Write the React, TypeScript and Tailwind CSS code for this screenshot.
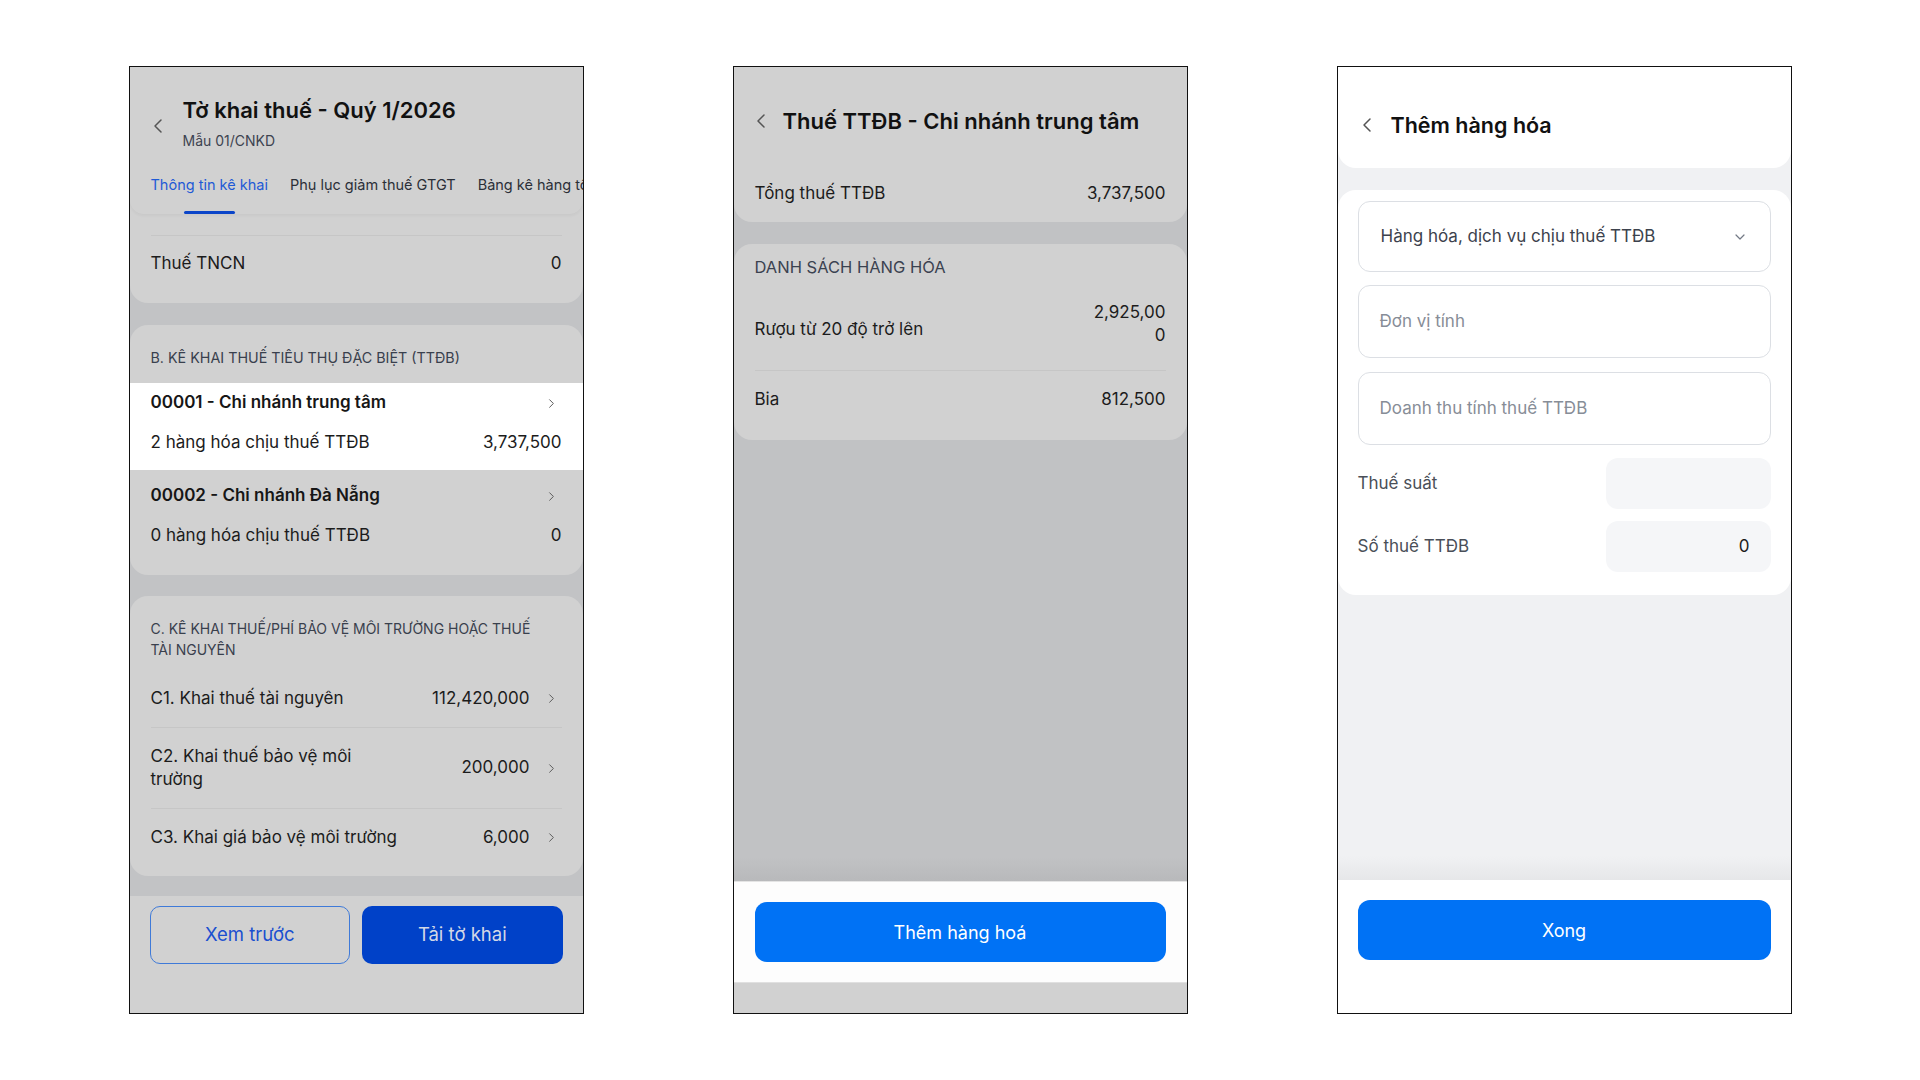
import { ChevronLeft, ChevronRight, ChevronDown } from 'lucide-react';

function Frame({ children, bg }: { children: React.ReactNode; bg: string }) {
  return (
    <div className={`w-[455px] h-[948px] border-[1.5px] border-[#111] overflow-hidden flex flex-col ${bg}`}>
      {children}
    </div>
  );
}

function Row({ label, value, bold }: { label: string; value?: string; bold?: boolean }) {
  return (
    <div className="flex items-center justify-between h-[40px]">
      <span className={bold ? 'font-semibold text-[17px] text-[#161616]' : 'text-[17px] text-[#1c1c1c]'}>{label}</span>
      {value !== undefined ? (
        <span className="text-[17px] text-[#1c1c1c]">{value}</span>
      ) : (
        <ChevronRight size={15} strokeWidth={1.6} className="text-[#5c5c5c] mr-[3px]" />
      )}
    </div>
  );
}

function LinkRow({ label, value, h }: { label: React.ReactNode; value: string; h: string }) {
  return (
    <div className={`flex items-center justify-between ${h}`}>
      <span className="text-[17px] leading-[23px] text-[#1c1c1c]">{label}</span>
      <div className="flex items-center gap-[14px]">
        <span className="text-[17px] text-[#1c1c1c]">{value}</span>
        <ChevronRight size={15} strokeWidth={1.6} className="text-[#5c5c5c] mr-[3px]" />
      </div>
    </div>
  );
}

function TaxDeclaration() {
  return (
    <Frame bg="bg-[#c2c3c5]">
      <div className="bg-[#d1d1d1] rounded-b-[18px]">
        <div className="shadow-[0_2px_3px_rgba(0,0,0,0.04)] rounded-b-[14px]">
          <div className="flex items-center pl-[16px] pt-[28px]">
            <ChevronLeft size={24} strokeWidth={1.5} className="text-[#555] mt-[6px]" />
            <div className="ml-[13px]">
              <div className="text-[22px] leading-[30px] font-semibold text-[#111]">Tờ khai thuế - Quý 1/2026</div>
              <div className="text-[14px] leading-[20px] text-[#3d4350] mt-[6px]">Mẫu 01/CNKD</div>
            </div>
          </div>
          <div className="flex gap-[22px] pl-[21px] mt-[24px] whitespace-nowrap text-[14.5px]">
            <div className="flex flex-col items-center">
              <span className="text-[#1f5ad6] leading-[20px]">Thông tin kê khai</span>
              <div className="w-[51px] h-[3px] bg-[#0b45c9] rounded-full mt-[16px]" />
            </div>
            <span className="text-[#2b2f38] leading-[20px]">Phụ lục giảm thuế GTGT</span>
            <span className="text-[#2b2f38] leading-[20px]">Bảng kê hàng tồn kho</span>
          </div>
        </div>
        <div className="px-[21px] pt-[21px] pb-[11px]">
          <div className="border-t border-[#c6c6c6]" />
          <div className="flex items-center justify-between h-[56px]">
            <span className="text-[17px] text-[#1c1c1c]">Thuế TNCN</span>
            <span className="text-[17px] text-[#1c1c1c]">0</span>
          </div>
        </div>
      </div>

      <div className="bg-[#d1d1d1] rounded-[18px] mt-[22px] overflow-hidden">
        <div className="px-[21px] pt-[23px] pb-[15px] text-[14.3px] leading-[20px] uppercase text-[#39404d] whitespace-nowrap">
          B. Kê khai thuế tiêu thụ đặc biệt (TTĐB)
        </div>
        <div className="bg-white px-[21px] pb-[7px]">
          <Row label="00001 - Chi nhánh trung tâm" bold />
          <Row label="2 hàng hóa chịu thuế TTĐB" value="3,737,500" />
        </div>
        <div className="px-[21px] pt-[6px] pb-[19px]">
          <Row label="00002 - Chi nhánh Đà Nẵng" bold />
          <Row label="0 hàng hóa chịu thuế TTĐB" value="0" />
        </div>
      </div>

      <div className="bg-[#d1d1d1] rounded-[18px] mt-[21px] px-[21px] pb-[10px]">
        <div className="pt-[22px] pb-[10px] text-[14px] leading-[21px] uppercase text-[#39404d]">
          C. Kê khai thuế/phí bảo vệ môi trường hoặc thuế
          <br />
          tài nguyên
        </div>
        <LinkRow label="C1. Khai thuế tài nguyên" value="112,420,000" h="h-[57px]" />
        <div className="border-t border-[#c6c6c6]" />
        <LinkRow
          label={
            <>
              C2. Khai thuế bảo vệ môi
              <br />
              trường
            </>
          }
          value="200,000"
          h="h-[80px]"
        />
        <div className="border-t border-[#c6c6c6]" />
        <LinkRow label="C3. Khai giá bảo vệ môi trường" value="6,000" h="h-[57px]" />
      </div>

      <div className="mt-[20px] flex-1 bg-[#d1d1d1] px-[20px] pt-[10px] flex gap-[12px]">
        <button className="w-[201px] h-[58px] rounded-[10px] border border-[#3f7ad8] text-[#1a4fd0] text-[18.5px]">
          Xem trước
        </button>
        <button className="w-[201px] h-[58px] rounded-[10px] bg-[#0041c8] text-[#d3d8e6] text-[18.5px]">
          Tải tờ khai
        </button>
      </div>
    </Frame>
  );
}

function BranchTax() {
  return (
    <Frame bg="bg-[#c1c2c4]">
      <div className="bg-[#d1d1d1] rounded-b-[18px] px-[21px] pt-[39px] pb-[16px]">
        <div className="flex items-center">
          <ChevronLeft size={24} strokeWidth={1.5} className="text-[#555] -ml-[6px]" />
          <span className="ml-[10px] text-[22px] leading-[30px] font-semibold text-[#111]">
            Thuế TTĐB - Chi nhánh trung tâm
          </span>
        </div>
        <div className="flex items-center justify-between h-[24px] mt-[46px]">
          <span className="text-[17px] text-[#1c1c1c]">Tổng thuế TTĐB</span>
          <span className="text-[17px] text-[#1c1c1c]">3,737,500</span>
        </div>
      </div>

      <div className="bg-[#d1d1d1] rounded-[18px] mt-[22px] px-[21px] pb-[11px]">
        <div className="pt-[12px] text-[16.5px] leading-[22px] uppercase text-[#3b4250]">Danh sách hàng hóa</div>
        <div className="flex items-center justify-between h-[80px] mt-[12px]">
          <span className="text-[17px] text-[#1c1c1c]">Rượu từ 20 độ trở lên</span>
          <span className="text-[17px] leading-[23px] text-[#1c1c1c] text-right -mt-[12px]">
            2,925,00
            <br />0
          </span>
        </div>
        <div className="border-t border-[#c6c6c6]" />
        <div className="flex items-center justify-between h-[58px]">
          <span className="text-[17px] text-[#1c1c1c]">Bia</span>
          <span className="text-[17px] text-[#1c1c1c]">812,500</span>
        </div>
      </div>

      <div className="flex-1 flex flex-col justify-end">
        <div className="h-[24px] bg-gradient-to-b from-transparent to-[#b8b9bb]" />
      </div>
      <div className="h-[101px] bg-[#fdfdfd] px-[21px] pt-[20px] border-t border-[#e4e4e4]">
        <button className="w-full h-[60px] rounded-[12px] bg-[#0072f5] text-white text-[18px]">
          Thêm hàng hoá
        </button>
      </div>
      <div className="h-[31px] bg-[#d1d1d1] border-t border-[#e0e0e0]" />
    </Frame>
  );
}

function AddGoods() {
  return (
    <Frame bg="bg-[#f0f1f3]">
      <div className="bg-white rounded-b-[18px] h-[101px] flex items-center pl-[17px] pt-[14px]">
        <ChevronLeft size={24} strokeWidth={1.5} className="text-[#555]" />
        <span className="ml-[12px] text-[21.5px] leading-[30px] font-semibold text-[#111]">Thêm hàng hóa</span>
      </div>

      <div className="bg-white rounded-[18px] mt-[22px] px-[20px] pt-[11px] pb-[23px]">
        <div className="h-[71px] rounded-[12px] border border-[#dcdfe4] flex items-center justify-between pl-[22px] pr-[22px]">
          <span className="text-[17px] text-[#3c424d]">Hàng hóa, dịch vụ chịu thuế TTĐB</span>
          <ChevronDown size={16} strokeWidth={1.8} className="text-[#737985]" />
        </div>
        <div className="h-[73px] mt-[13px] rounded-[12px] border border-[#dcdfe4] flex items-center pl-[21px]">
          <span className="text-[17px] text-[#878d97]">Đơn vị tính</span>
        </div>
        <div className="h-[73px] mt-[14px] rounded-[12px] border border-[#dcdfe4] flex items-center pl-[21px]">
          <span className="text-[17px] text-[#878d97]">Doanh thu tính thuế TTĐB</span>
        </div>
        <div className="flex items-center justify-between mt-[13px]">
          <span className="text-[17px] text-[#4a4f58]">Thuế suất</span>
          <div className="w-[165px] h-[51px] rounded-[12px] bg-[#f5f6f8]" />
        </div>
        <div className="flex items-center justify-between mt-[12px]">
          <span className="text-[17px] text-[#4a4f58]">Số thuế TTĐB</span>
          <div className="w-[165px] h-[51px] rounded-[12px] bg-[#f5f6f8] flex items-center justify-end pr-[21px]">
            <span className="text-[17px] text-[#1c1c1c]">0</span>
          </div>
        </div>
      </div>

      <div className="flex-1 flex flex-col justify-end">
        <div className="h-[24px] bg-gradient-to-b from-transparent to-[#e6e7e9]" />
      </div>
      <div className="h-[133px] bg-white px-[20px] pt-[20px]">
        <button className="w-full h-[60px] rounded-[12px] bg-[#0072f5] text-white text-[18px]">
          Xong
        </button>
      </div>
    </Frame>
  );
}

export default function App() {
  return (
    <div className="w-[1920px] h-[1080px] bg-white font-['Inter',sans-serif] flex justify-center gap-[149px] pt-[66px]">
      <TaxDeclaration />
      <BranchTax />
      <AddGoods />
    </div>
  );
}
